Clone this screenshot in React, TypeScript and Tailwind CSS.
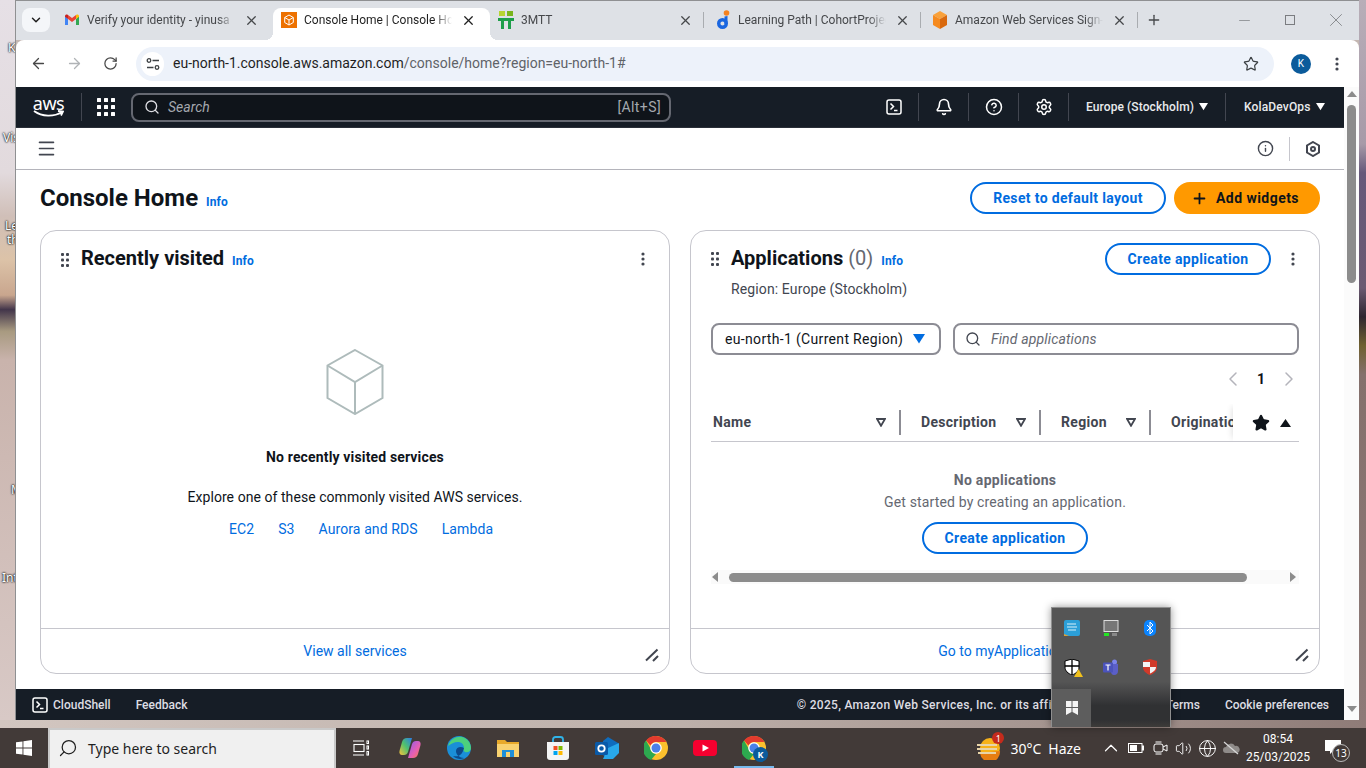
import React from "react";
import {
  ArrowLeft,
  ArrowRight,
  RotateCw,
  Star,
  Plus,
  Minus,
  X,
  ChevronDown,
  ChevronUp,
  ChevronLeft,
  ChevronRight,
  Search,
  Bell,
  CircleHelp,
  Settings,
  Info,
  Menu,
  Volume2,
  Globe,
} from "lucide-react";

/* ---------- small drawn icons ---------- */

function GmailIcon() {
  return (
    <svg width="16" height="16" viewBox="0 0 16 16">
      <path d="M1 4v9h3V7z" fill="#4285f4" />
      <path d="M15 4v9h-3V7z" fill="#34a853" />
      <path d="M12 3v4l3-2.2V4c0-1.4-1.600-2-2.600-1.300z" fill="#fbbc04" />
      <path d="M4 7V3l4 3 4-3v4L8 10z" fill="#ea4335" />
      <path d="M1 4c0-1.400 1.600-2 2.600-1.300L4 3v4L1 4.800z" fill="#c5221f" />
    </svg>
  );
}

function ConsoleFavicon() {
  return (
    <svg width="16" height="16" viewBox="0 0 16 16">
      <rect width="16" height="16" fill="#ed7100" />
      <path d="M8 3l4.300 2.500v5L8 13l-4.300-2.500v-5zM3.700 5.500L8 8l4.300-2.500M8 8v5" fill="none" stroke="#fff" strokeWidth="1" />
    </svg>
  );
}

function MttIcon() {
  return (
    <svg width="16" height="18" viewBox="0 0 16 18">
      <rect x="1" y="0" width="6" height="5" fill="#b6d433" />
      <rect x="9" y="0" width="6" height="5" fill="#7ab51d" />
      <rect x="0" y="7" width="16" height="3" fill="#1e9e4a" />
      <rect x="3" y="10" width="3" height="8" fill="#1e9e4a" />
      <rect x="10" y="10" width="3" height="8" fill="#1e9e4a" />
    </svg>
  );
}

function LearningIcon() {
  return (
    <svg width="16" height="20" viewBox="0 0 16 20">
      <circle cx="11.500" cy="3" r="2.800" fill="#f58220" />
      <circle cx="7.500" cy="13.500" r="3.800" fill="none" stroke="#1a66e0" strokeWidth="3.400" />
      <path d="M9.500 6.500l3-.5v8h-3z" fill="#1a66e0" />
    </svg>
  );
}

function OrangeCube() {
  return (
    <svg width="16" height="20" viewBox="0 0 16 20">
      <path d="M8 1l7 4-7 4-7-4z" fill="#f9a13a" />
      <path d="M1 5l7 4v10l-7-4z" fill="#f58a1f" />
      <path d="M15 5l-7 4v10l7-4z" fill="#d9690e" />
    </svg>
  );
}

function TuneIcon() {
  return (
    <svg width="14" height="14" viewBox="0 0 14 14" fill="none" stroke="#3c4043" strokeWidth="1.300">
      <circle cx="3" cy="3.500" r="1.800" />
      <path d="M6.500 3.500H13M1 10.500h6.500" />
      <circle cx="11" cy="10.500" r="1.800" />
    </svg>
  );
}

function ShellIcon({ size = 16 }: { size?: number }) {
  return (
    <svg width={size} height={size} viewBox="0 0 16 16" fill="none" stroke="#fff" strokeWidth="1.500">
      <rect x="1" y="1" width="14" height="14" rx="2" />
      <path d="M4.500 4.500L7.500 7.500 4.500 10.500M8 11.500h3.500" />
    </svg>
  );
}

function GripIcon() {
  return (
    <svg width="8" height="14" viewBox="0 0 8 14" fill="#424650">
      <rect x="0" y="0" width="3" height="3" rx="1" />
      <rect x="5" y="0" width="3" height="3" rx="1" />
      <rect x="0" y="5.500" width="3" height="3" rx="1" />
      <rect x="5" y="5.500" width="3" height="3" rx="1" />
      <rect x="0" y="11" width="3" height="3" rx="1" />
      <rect x="5" y="11" width="3" height="3" rx="1" />
    </svg>
  );
}

function KebabIcon() {
  return (
    <svg width="4" height="14" viewBox="0 0 4 14" fill="#424650">
      <circle cx="2" cy="2" r="1.600" />
      <circle cx="2" cy="7" r="1.600" />
      <circle cx="2" cy="12" r="1.600" />
    </svg>
  );
}

function ResizeIcon() {
  return (
    <svg width="14" height="14" viewBox="0 0 14 14" stroke="#424650" strokeWidth="2" fill="none">
      <path d="M1 12.500L12.500 1.500M8 13L13 8" />
    </svg>
  );
}

function FilterIcon() {
  return (
    <svg width="10" height="9" viewBox="0 0 10 9" fill="none" stroke="#424650" strokeWidth="1.800">
      <path d="M1 1h8L5 7.800z" />
    </svg>
  );
}

function CaretDown({ color = "#fff", size = 9 }: { color?: string; size?: number }) {
  return (
    <svg width={size} height={size * 0.8} viewBox="0 0 10 8" fill={color}>
      <path d="M0 0h10L5 8z" />
    </svg>
  );
}

function HexIcon() {
  return (
    <svg width="16" height="16" viewBox="0 0 16 16" fill="none" stroke="#424650" strokeWidth="2">
      <path d="M8 1l6 3.500v7L8 15l-6-3.500v-7z" />
      <circle cx="8" cy="8" r="2" />
    </svg>
  );
}

function CubeIcon() {
  return (
    <svg width="58" height="66" viewBox="0 0 58 66" fill="none" stroke="#aebbbb" strokeWidth="2">
      <path d="M29 1l27.500 15.500v32.500L29 65 1.500 49V16.500z" />
      <path d="M1.500 16.500L29 33l27.500-16.500M29 33v32" />
    </svg>
  );
}

function TinyScrollArrow({ dir }: { dir: "up" | "down" | "left" | "right" }) {
  const d = {
    up: "M0 7L5 1l5 6z",
    down: "M0 1l5 6 5-6z",
    left: "M7 0L1 5l6 5z",
    right: "M1 0l6 5-6 5z",
  }[dir];
  return (
    <svg width="10" height="10" viewBox="0 0 10 10" fill="#8c8c8c">
      <path d={d} />
    </svg>
  );
}

/* taskbar app icons */

function WindowsLogo() {
  return (
    <svg width="16" height="16" viewBox="0 0 16 16" fill="#fff">
      <path d="M0 2.300L6.500 1.400V7.500H0zM7.400 1.300L16 0v7.500H7.400zM0 8.400h6.500v6.200L0 13.700zM7.400 8.400H16V16l-8.600-1.200z" />
    </svg>
  );
}

function TaskViewIcon() {
  return (
    <svg width="16" height="16" viewBox="0 0 16 16" fill="none" stroke="#fff" strokeWidth="1.100">
      <path d="M0 1h11M0 15h11" />
      <rect x="1" y="4.500" width="10" height="7" />
      <rect x="14" y="1" width="1.500" height="2.500" />
      <rect x="14" y="6" width="1.500" height="3" />
      <rect x="14" y="11.500" width="1.500" height="3.500" />
    </svg>
  );
}

function CopilotIcon() {
  return (
    <svg width="22" height="22" viewBox="0 0 22 22">
      <defs>
        <linearGradient id="cp1" x1="0" y1="1" x2="1" y2="0">
          <stop offset="0" stopColor="#f9c23c" />
          <stop offset="0.5" stopColor="#4fc26d" />
          <stop offset="1" stopColor="#2b7de9" />
        </linearGradient>
        <linearGradient id="cp2" x1="0" y1="0" x2="1" y2="1">
          <stop offset="0" stopColor="#8a5cf0" />
          <stop offset="0.6" stopColor="#e85fb0" />
          <stop offset="1" stopColor="#f5803e" />
        </linearGradient>
      </defs>
      <path d="M8 1h5l-4 14c-.7 2-2 3-4 3H3c-2 0-3-2-2.500-4L3 5c.7-2.500 2.500-4 5-4z" fill="url(#cp1)" />
      <path d="M14 21H9l4-14c.7-2 2-3 4-3h2c2 0 3 2 2.500 4L19 17c-.7 2.500-2.500 4-5 4z" fill="url(#cp2)" />
    </svg>
  );
}

function EdgeIcon() {
  return (
    <svg width="24" height="24" viewBox="0 0 24 24">
      <circle cx="12" cy="12" r="12" fill="#1a8fd8" />
      <path d="M1 10C3 3 10 0 15 1c5 1 9 6 9 11 0 3-3 5-6 4-2-1-2-3-1-4 0-4-3-6-6-6-4 0-7 2-10 4z" fill="#4cd07d" />
      <path d="M17 12c-3-2-8-1-8 3 0 4 4 7 8 7 1 0-6 3-11-2 5 1 9 0 11-8z" fill="#0c4a8c" />
    </svg>
  );
}

function FolderIcon() {
  return (
    <svg width="22" height="20" viewBox="0 0 22 20">
      <path d="M0 2h8l2 2h12v14H0z" fill="#e8a92a" />
      <path d="M0 6h22v13H0z" fill="#f9d270" />
      <rect x="5" y="12" width="12" height="7" fill="#1f8fd8" />
      <rect x="9" y="14" width="4" height="5" fill="#f9d270" />
    </svg>
  );
}

function StoreIcon() {
  return (
    <svg width="24" height="24" viewBox="0 0 24 24">
      <path d="M7 7V3.500C7 2 8 1 9.500 1h5C16 1 17 2 17 3.500V7" fill="none" stroke="#30b3e8" strokeWidth="1.800" />
      <path d="M1 6h22v15c0 1.700-1 3-3 3H4c-2 0-3-1.300-3-3z" fill="#f4f4f4" />
      <rect x="7.500" y="10" width="4" height="4" fill="#f25022" />
      <rect x="12.500" y="10" width="4" height="4" fill="#7fba00" />
      <rect x="7.500" y="15" width="4" height="4" fill="#00a4ef" />
      <rect x="12.500" y="15" width="4" height="4" fill="#ffb900" />
    </svg>
  );
}

function OutlookIcon() {
  return (
    <svg width="24" height="24" viewBox="0 0 24 24">
      <path d="M13 1l10 6v10l-10 6-5-4V5z" fill="#0f6cbd" />
      <path d="M13 12l11-5v10l-6 6H8z" fill="#28a8ea" />
      <rect x="0" y="6" width="13" height="13" rx="1.500" fill="#0a5aa8" />
      <circle cx="6.500" cy="12.500" r="3.200" fill="none" stroke="#fff" strokeWidth="1.800" />
    </svg>
  );
}

function ChromeIcon({ badge }: { badge?: boolean }) {
  return (
    <div className="relative w-6 h-6">
      <svg width="24" height="24" viewBox="0 0 24 24">
        <circle cx="12" cy="12" r="12" fill="#fbc02d" />
        <path d="M12 0a12 12 0 0 1 10.400 6H12a6 6 0 0 0-5.500 3.500L2 4.500A12 12 0 0 1 12 0z" fill="#e33b2e" />
        <path d="M2 4.500l4.800 8.400a6 6 0 0 0 5.200 5.100L7 24A12 12 0 0 1 2 4.500z" fill="#2da94f" />
        <circle cx="12" cy="12" r="5.800" fill="#fff" />
        <circle cx="12" cy="12" r="4.500" fill="#4a80e8" />
      </svg>
      {badge && (
        <span className="absolute -right-[2px] -bottom-[2px] w-[15px] h-[15px] rounded-full bg-[#0b5b9b] text-white text-[9px] font-bold flex items-center justify-center">
          K
        </span>
      )}
    </div>
  );
}

function YoutubeIcon() {
  return (
    <svg width="24" height="18" viewBox="0 0 24 18">
      <rect width="24" height="16" y="1" rx="4" fill="#f5002f" />
      <path d="M9.500 5.500L16 9l-6.500 3.500z" fill="#fff" />
    </svg>
  );
}

function WeatherIcon() {
  return (
    <div className="relative w-6 h-6">
      <svg width="24" height="24" viewBox="0 0 24 24">
        <circle cx="13" cy="12" r="10" fill="#f7b21a" />
        <path d="M3 17a10 10 0 0 0 20-2z" fill="#e67e12" />
        <path d="M0 9h20M0 13h20M1 17h18" stroke="#e8d4a8" strokeWidth="1.800" />
      </svg>
      <span className="absolute -right-[3px] -top-[4px] w-3 h-3 rounded-full bg-[#c42b1c] text-white text-[9px] leading-none flex items-center justify-center">
        1
      </span>
    </div>
  );
}

/* ---------- browser chrome ---------- */

const tabs = [
  { title: "Verify your identity - yinusa", icon: <GmailIcon /> },
  { title: "Console Home | Console Home", icon: <ConsoleFavicon />, active: true },
  { title: "3MTT", icon: <MttIcon /> },
  { title: "Learning Path | CohortProject", icon: <LearningIcon /> },
  { title: "Amazon Web Services Sign-In", icon: <OrangeCube /> },
];

function BrowserTab({ title, icon, active, sep }: { title: string; icon: React.ReactNode; active?: boolean; sep?: boolean }) {
  return (
    <div
      className={`relative w-[217px] h-8 flex items-center pl-2 pr-3 pb-2 rounded-t-lg ${
        active ? "bg-white text-[#1f1f1f]" : "text-[#45474a]"
      }`}
    >
      {active && (
        <>
          <span className="absolute -left-2 bottom-0 w-2 h-2 bg-[radial-gradient(circle_at_0_0,transparent_8px,white_8px)]" />
          <span className="absolute -right-2 bottom-0 w-2 h-2 bg-[radial-gradient(circle_at_100%_0,transparent_8px,white_8px)]" />
        </>
      )}
      <span className="w-4 h-5 flex items-center justify-center shrink-0">{icon}</span>
      <span className="ml-[7px] w-[148px] overflow-hidden whitespace-nowrap text-[12px] [mask-image:linear-gradient(to_right,black_88%,transparent)]">
        {title}
      </span>
      <X className="ml-[9px] shrink-0" size={15} strokeWidth={2} color={active ? "#1f1f1f" : "#45474a"} />
      {sep && <span className="absolute right-[3px] top-[4px] w-[1.500px] h-4 bg-[#a9acb0]" />}
    </div>
  );
}

function TabStrip() {
  return (
    <div className="h-10 bg-[#dee1e6] border-t border-[#8f9092] flex items-end">
      <div className="w-[28px] h-6 mb-2 ml-[6px] bg-[#f4f6f9] rounded-lg flex items-center justify-center">
        <ChevronDown size={14} strokeWidth={2.500} color="#1f1f1f" />
      </div>
      <div className="flex ml-[6px]">
        {tabs.map((t, i) => (
          <BrowserTab key={t.title} title={t.title} icon={t.icon} active={t.active} sep={i >= 2} />
        ))}
      </div>
      <div className="h-8 pb-2 flex items-center ml-[5px]">
        <Plus size={16} strokeWidth={2} color="#45474a" />
      </div>
      <div className="ml-auto flex h-[38px] self-start">
        <div className="w-[46px] flex items-center justify-center">
          <Minus size={17} strokeWidth={1} color="#7a7c80" />
        </div>
        <div className="w-[46px] flex items-center justify-center">
          <span className="w-[10px] h-[10px] border border-[#7a7c80]" />
        </div>
        <div className="w-[46px] flex items-center justify-center">
          <X size={22} strokeWidth={0.900} color="#7a7c80" />
        </div>
      </div>
    </div>
  );
}

function AddressBar() {
  return (
    <div className="h-[47px] bg-white rounded-t-lg flex items-center pl-1 pr-2">
      <div className="w-9 flex justify-center">
        <ArrowLeft size={17} strokeWidth={1.800} color="#474747" />
      </div>
      <div className="w-9 flex justify-center">
        <ArrowRight size={17} strokeWidth={1.800} color="#b0b3b6" />
      </div>
      <div className="w-9 flex justify-center">
        <RotateCw size={15} strokeWidth={2} color="#474747" />
      </div>
      <div className="ml-[8px] w-[1138px] h-[34px] rounded-full bg-[#edf2fa] flex items-center pl-[5px] pr-[15px]">
        <div className="w-[23px] h-6 rounded-full bg-white flex items-center justify-center">
          <TuneIcon />
        </div>
        <span className="ml-[9px] text-[14px] text-[#5f6368] whitespace-nowrap">
          <span className="text-[#1f1f1f]">eu-north-1.console.aws.amazon.com</span>/console/home?region=eu-north-1#
        </span>
        <Star className="ml-auto" size={16} strokeWidth={1.800} color="#3c4043" />
      </div>
      <div className="ml-[17px] w-5 h-5 rounded-full bg-[#0b5b9b] text-white text-[10px] flex items-center justify-center">K</div>
      <div className="ml-[24px]">
        <KebabIcon />
      </div>
    </div>
  );
}

/* ---------- AWS console ---------- */

function NavIconCell({ children }: { children: React.ReactNode }) {
  return <div className="w-[50px] h-7 flex items-center justify-center border-r border-[#424650]">{children}</div>;
}

function AwsNav() {
  return (
    <div className="h-[41px] bg-[#161d26] flex items-center border-b border-[#2a2f38] pl-[17px]">
      <div className="w-[31px] flex flex-col items-center">
        <span className="text-white text-[18px] leading-[14px] tracking-[-0.5px] [font-family:'Noto_Sans',sans-serif]">aws</span>
        <svg width="31" height="8" viewBox="0 0 31 8" fill="none" stroke="#fff" strokeWidth="1.800">
          <path d="M1 1c8 6 20 6 28 1M25 1l5 .500-2 4" />
        </svg>
      </div>
      <div className="ml-[17px] w-px h-7 bg-[#424650]" />
      <svg className="ml-[15px]" width="18" height="18" viewBox="0 0 18 18" fill="#fff">
        {[0, 7, 14].map((y) =>
          [0, 7, 14].map((x) => <rect key={`${x}-${y}`} x={x} y={y} width="4" height="4" rx="0.500" />)
        )}
      </svg>
      <div className="ml-4 w-[540px] h-[29px] rounded-lg border-2 border-[#656871] bg-[#0f141a] flex items-center pl-[11px] pr-2">
        <Search size={16} strokeWidth={2} color="#dedee3" />
        <span className="ml-[8px] text-[14px] italic text-[#a4a8ae]">Search</span>
        <span className="ml-auto text-[14px] tracking-[0.4px] text-[#a4a8ae]">[Alt+S]</span>
      </div>
      <div className="ml-auto flex items-center">
        <NavIconCell>
          <ShellIcon />
        </NavIconCell>
        <NavIconCell>
          <Bell size={18} strokeWidth={2.200} color="#fff" />
        </NavIconCell>
        <NavIconCell>
          <CircleHelp size={18} strokeWidth={2} color="#fff" />
        </NavIconCell>
        <NavIconCell>
          <Settings size={18} strokeWidth={2} color="#fff" />
        </NavIconCell>
        <div className="w-[157px] h-7 border-r border-[#424650] flex items-center pl-[17px] gap-[5px] text-[12px] font-medium tracking-[0.1px] text-[#e9ebed] whitespace-nowrap">
          Europe (Stockholm)
          <CaretDown />
        </div>
        <div className="w-[118px] h-7 flex items-center pl-[18px] gap-[5px] text-[12px] font-medium tracking-[0.15px] text-[#e9ebed]">
          KolaDevOps
          <CaretDown />
        </div>
      </div>
    </div>
  );
}

function SubNav() {
  return (
    <div className="h-[42px] bg-white border-b border-[#b4b4bb] flex items-center pl-[20px] pr-[23px]">
      <Menu size={21} strokeWidth={1.800} color="#424650" />
      <Info className="ml-auto" size={17} strokeWidth={2} color="#424650" />
      <div className="ml-[15px] w-px h-6 bg-[#c6c6cd]" />
      <div className="ml-[15px]">
        <HexIcon />
      </div>
    </div>
  );
}

function PillButton({ children, className = "" }: { children: React.ReactNode; className?: string }) {
  return (
    <div className={`h-8 rounded-full border-2 border-[#006ce0] bg-white flex items-center justify-center text-[14px] font-bold tracking-[0.35px] text-[#006ce0] ${className}`}>
      {children}
    </div>
  );
}

function RecentlyVisited() {
  return (
    <section className="rounded-2xl border border-[#c6c6cd] bg-white flex flex-col">
      <div className="h-[54px] flex items-center pl-5 pr-[24px]">
        <span className="mt-[3px]">
          <GripIcon />
        </span>
        <h2 className="ml-3 text-[20px] font-bold text-[#0f141a]">Recently visited</h2>
        <span className="ml-2 mt-[5px] text-[12px] font-bold tracking-[0.2px] text-[#006ce0]">Info</span>
        <span className="ml-auto mt-[2px]">
          <KebabIcon />
        </span>
      </div>
      <div className="flex-1 flex flex-col items-center pt-[64px] text-[#0f141a] text-[14px]">
        <CubeIcon />
        <p className="mt-[32px] font-bold tracking-[0.15px]">No recently visited services</p>
        <p className="mt-[19px] tracking-[0.06px]">Explore one of these commonly visited AWS services.</p>
        <div className="mt-[11px] ml-3 flex gap-6 tracking-[0.1px] text-[#006ce0]">
          <span>EC2</span>
          <span>S3</span>
          <span>Aurora and RDS</span>
          <span>Lambda</span>
        </div>
      </div>
      <div className="h-[45px] border-t border-[#c6c6cd] relative flex items-center justify-center text-[14px] text-[#006ce0]">
        View all services
        <span className="absolute right-[10px] top-[19px]">
          <ResizeIcon />
        </span>
      </div>
    </section>
  );
}

function HeaderCell({ label, width }: { label: string; width: string }) {
  return (
    <div className={`${width} shrink-0 flex items-center h-[25px] text-[14px] font-bold tracking-[0.3px] text-[#424650]`}>
      <span>{label}</span>
      <span className="ml-auto">
        <FilterIcon />
      </span>
      <span className="ml-[13px] w-[2px] h-[25px] bg-[#8c8c94]" />
    </div>
  );
}

function Applications() {
  return (
    <section className="rounded-2xl border border-[#c6c6cd] bg-white flex flex-col">
      <div className="pl-5 pr-[24px] pt-[12px] flex items-center">
        <GripIcon />
        <h2 className="ml-3 -mt-[2px] text-[20px] font-bold text-[#0f141a]">
          Applications <span className="font-normal text-[#656871]">(0)</span>
        </h2>
        <span className="ml-2 mt-1 text-[12px] font-bold tracking-[0.2px] text-[#006ce0]">Info</span>
        <PillButton className="ml-auto w-[166px]">Create application</PillButton>
        <span className="ml-5">
          <KebabIcon />
        </span>
      </div>
      <p className="ml-10 mt-[4px] text-[14px] tracking-[0.12px] text-[#424650]">Region: Europe (Stockholm)</p>
      <div className="mt-[23px] mx-5 flex gap-3">
        <div className="w-[230px] h-8 rounded-lg border-2 border-[#8c8c94] flex items-center pl-3 pr-[14px] text-[14px] tracking-[0.33px] text-[#0f141a]">
          eu-north-1 (Current Region)
          <span className="ml-auto">
            <CaretDown color="#006ce0" size={12} />
          </span>
        </div>
        <div className="flex-1 h-8 rounded-lg border-2 border-[#8c8c94] flex items-center pl-[10px]">
          <Search size={16} strokeWidth={2} color="#424650" />
          <span className="ml-[10px] text-[14px] tracking-[0.15px] italic text-[#656871]">Find applications</span>
        </div>
      </div>
      <div className="mt-[14px] mx-5 h-5 flex items-center justify-end text-[14px] font-bold text-[#0f141a]">
        <ChevronLeft size={24} strokeWidth={1.500} color="#b4b4bb" />
        <span className="w-[32px] text-center">1</span>
        <ChevronRight className="-mr-[2px]" size={24} strokeWidth={1.500} color="#b4b4bb" />
      </div>
      <div className="relative mt-[15px] mx-5 h-[38px] border-b border-[#c6c6cd] flex items-center pl-[2px] overflow-hidden">
        <HeaderCell label="Name" width="w-[188px]" />
        <span className="w-5 shrink-0" />
        <HeaderCell label="Description" width="w-[120px]" />
        <span className="w-5 shrink-0" />
        <HeaderCell label="Region" width="w-[90px]" />
        <span className="w-5 shrink-0" />
        <span className="text-[14px] font-bold tracking-[0.3px] text-[#424650] whitespace-nowrap">Origination</span>
        <div className="absolute right-0 top-0 bottom-0 w-[66px] bg-white shadow-[-4px_0_6px_-3px_rgba(0,0,0,0.12)] flex items-center pl-[19px] gap-[10px]">
          <Star size={18} fill="#0f141a" color="#0f141a" />
          <svg width="11" height="8" viewBox="0 0 11 8" fill="#0f141a">
            <path d="M0 8L5.500 0 11 8z" />
          </svg>
        </div>
      </div>
      <div className="flex flex-col items-center mt-[29px] text-[14px] text-[#656871]">
        <p className="font-bold leading-[18px] tracking-[0.3px]">No applications</p>
        <p className="mt-[3px] leading-[20px] tracking-[0.15px]">Get started by creating an application.</p>
        <PillButton className="mt-[10px] w-[166px]">Create application</PillButton>
      </div>
      <div className="mt-[16px] mx-5 h-[14px] bg-[#fafafa] flex items-center">
        <TinyScrollArrow dir="left" />
        <div className="ml-2 w-[518px] h-[9px] rounded-full bg-[#8c8c8c]" />
        <span className="ml-auto">
          <TinyScrollArrow dir="right" />
        </span>
      </div>
      <div className="mt-auto h-[45px] border-t border-[#c6c6cd] relative flex items-center justify-center text-[14px] text-[#006ce0]">
        Go to myApplications
        <span className="absolute right-[10px] top-[19px]">
          <ResizeIcon />
        </span>
      </div>
    </section>
  );
}

function ConsoleContent() {
  return (
    <div className="flex-1 bg-white px-6 pt-3 pb-[15px] flex flex-col min-h-0">
      <div className="flex items-center h-8">
        <h1 className="text-[24px] font-bold text-[#0f141a]">Console Home</h1>
        <span className="ml-2 mt-2 text-[12px] font-bold tracking-[0.1px] text-[#006ce0]">Info</span>
        <PillButton className="ml-auto w-[196px]">Reset to default layout</PillButton>
        <div className="ml-2 w-[146px] h-8 pr-1 rounded-full bg-[#ff9900] flex items-center justify-center gap-2 text-[14px] font-bold tracking-[0.45px] text-[#0f141a]">
          <Plus size={17} strokeWidth={2.500} />
          Add widgets
        </div>
      </div>
      <div className="mt-4 flex-1 grid grid-cols-2 gap-5 min-h-0">
        <RecentlyVisited />
        <Applications />
      </div>
    </div>
  );
}

function ConsoleFooter() {
  return (
    <div className="h-[31px] bg-[#161d26] flex items-center pl-4 pr-[15px] text-[12px] font-medium text-[#dedee3] whitespace-nowrap">
      <ShellIcon />
      <span className="ml-[5px]">CloudShell</span>
      <span className="ml-[25px]">Feedback</span>
      <span className="ml-auto tracking-[0.3px]">© 2025, Amazon Web Services, Inc. or its affiliates.</span>
      <span className="ml-5">Privacy</span>
      <span className="ml-5">Terms</span>
      <span className="ml-[25px]">Cookie preferences</span>
    </div>
  );
}

function PageScrollbar() {
  return (
    <div className="w-[15px] bg-[#fbfbfb] flex flex-col items-center pt-[3px] pb-[5px]">
      <TinyScrollArrow dir="up" />
      <div className="mt-[5px] w-[9px] h-[178px] rounded-full bg-[#8c8c8c]" />
      <span className="mt-auto">
        <TinyScrollArrow dir="down" />
      </span>
    </div>
  );
}

/* ---------- desktop ---------- */

function TrayPopup() {
  return (
    <div className="absolute left-[1051px] top-[607px] w-[120px] h-[120px] grid grid-cols-3 grid-rows-3 border-t border-x border-[#8f8f8f] bg-[linear-gradient(#555555_62%,#303133_82%,#303133_94%,#3d3b39)] shadow-[0_0_8px_rgba(0,0,0,0.4)] items-center justify-items-center">
      <svg width="16" height="16" viewBox="0 0 16 16">
        <rect width="16" height="16" rx="2" fill="#2b9fd8" />
        <path d="M3 4h9M3 7h10M4 10h8" stroke="#d8f0fa" strokeWidth="1" />
        <path d="M0 14l5 2H0z" fill="#e0a030" />
      </svg>
      <svg width="16" height="16" viewBox="0 0 16 16">
        <rect x="1" y="0.500" width="14" height="11" fill="#777" stroke="#ddd" />
        <rect x="1" y="13" width="5" height="3" fill="#22e622" />
        <rect x="9" y="13" width="5" height="3" fill="#888" />
      </svg>
      <svg width="12" height="16" viewBox="0 0 12 16">
        <rect width="12" height="16" rx="5" fill="#0a84ff" />
        <path d="M3 5l6 6-3 3V2l3 3-6 6" fill="none" stroke="#fff" strokeWidth="1" />
      </svg>
      <div className="relative w-[16px] h-[16px]">
        <svg width="16" height="16" viewBox="0 0 16 16">
          <path d="M8 0l7 2v6c0 4-3 6.500-7 8-4-1.500-7-4-7-8V2z" fill="#fff" stroke="#000" />
          <path d="M8 0v16M1 7h14" stroke="#000" strokeWidth="1.300" />
        </svg>
        <svg className="absolute -right-[3px] -bottom-[2px]" width="9" height="8" viewBox="0 0 9 8">
          <path d="M4.500 0L9 8H0z" fill="#f2c11b" />
        </svg>
      </div>
      <svg width="16" height="16" viewBox="0 0 16 16">
        <circle cx="11.500" cy="3" r="2.500" fill="#7b83eb" />
        <path d="M8 5h7v7c0 2-1 4-4 4-2 0-3-2-3-3z" fill="#5b5fc7" />
        <rect x="0" y="3.500" width="10" height="10" rx="1" fill="#4b53bc" />
        <path d="M2.500 6h5M5 6v5.500" stroke="#fff" strokeWidth="1.200" />
      </svg>
      <svg width="16" height="16" viewBox="0 0 16 16">
        <path d="M8 0l7 2v6c0 4-3 6.500-7 8-4-1.500-7-4-7-8V2z" fill="#d13a2a" />
        <path d="M8 3H1v5h7zM8 8h6c0 3-2.500 5-6 6.500z" fill="#f4f4f4" />
      </svg>
      <div className="self-stretch justify-self-stretch mt-[2px] bg-[#5d5d5d] flex items-center justify-center">
        <svg width="12" height="14" viewBox="0 0 12 14" fill="#f4f4f4">
          <path d="M0 0h5.500v6H0zM6.500 0H12v6H6.500zM0 7h5.500v4L0 14zM6.500 7H12v7l-5.500-3z" />
        </svg>
      </div>
    </div>
  );
}

function AppIcon({ w, children, active }: { w: string; children: React.ReactNode; active?: boolean }) {
  return (
    <div className={`relative ${w} h-10 flex items-center justify-center shrink-0`}>
      {children}
      {active && <span className="absolute left-0 right-0 bottom-0 h-[2px] bg-[#76b9ed]" />}
    </div>
  );
}

function Taskbar() {
  return (
    <div className="h-10 bg-[#423a38] flex items-center text-white [font-family:'Noto_Sans',sans-serif]">
      <div className="w-12 flex justify-center">
        <WindowsLogo />
      </div>
      <div className="w-[288px] h-10 bg-[#f0f0f0] border-x-2 border-t-2 border-[#c9c9c9] flex items-center pl-[8px] pb-[2px] text-[14px] text-[#1f1f1f]">
        <Search size={20} strokeWidth={1.500} className="-scale-x-100 shrink-0" />
        <span className="ml-[10px]">Type here to search</span>
      </div>
      <AppIcon w="w-[49.250px]">
        <TaskViewIcon />
      </AppIcon>
      <AppIcon w="w-[49.250px]">
        <CopilotIcon />
      </AppIcon>
      <AppIcon w="w-[49.250px]">
        <EdgeIcon />
      </AppIcon>
      <AppIcon w="w-[49.250px]">
        <FolderIcon />
      </AppIcon>
      <AppIcon w="w-[49.250px]">
        <StoreIcon />
      </AppIcon>
      <AppIcon w="w-[49.250px]">
        <OutlookIcon />
      </AppIcon>
      <AppIcon w="w-[49.250px]">
        <ChromeIcon />
      </AppIcon>
      <AppIcon w="w-[49.250px]">
        <YoutubeIcon />
      </AppIcon>
      <div className="ml-1">
        <AppIcon w="w-[40px]" active>
          <ChromeIcon badge />
        </AppIcon>
      </div>
      <div className="ml-auto flex items-center text-[14px]">
        <WeatherIcon />
        <span className="ml-[9px]">30°C</span>
        <span className="ml-[7px]">Haze</span>
        <ChevronUp className="ml-[19px]" size={22} strokeWidth={1.300} />
        <svg className="ml-[6px]" width="16" height="10" viewBox="0 0 16 10" fill="none" stroke="#fff">
          <rect x="0.500" y="0.500" width="13.500" height="9" />
          <rect x="2" y="2" width="7" height="6" fill="#fff" stroke="none" />
          <rect x="14.500" y="3" width="1" height="4" fill="#fff" />
        </svg>
        <svg className="ml-[9px]" width="15" height="16" viewBox="0 0 15 16" fill="none" stroke="#fff">
          <rect x="1" y="4" width="9" height="8" rx="2" />
          <path d="M10 7l4-2v6l-4-2M2.500 2h6M2.500 14h6" />
        </svg>
        <Volume2 className="ml-[7px]" size={17} strokeWidth={1.300} />
        <Globe className="ml-[6px]" size={19} strokeWidth={1.200} />
        <svg className="ml-[6px]" width="17" height="14" viewBox="0 0 17 14" fill="#8f8b89">
          <path d="M3 12a3 3 0 0 1 0-6 5 5 0 0 1 9-1 3.500 3.500 0 0 1 2 7z" />
          <path d="M1 1l14 12" stroke="#d8d8d8" strokeWidth="1.200" />
        </svg>
        <div className="ml-[6px] w-[64px] flex flex-col items-center text-[12px] leading-[18px] [font-family:Roboto,sans-serif]">
          <span>08:54</span>
          <span>25/03/2025</span>
        </div>
        <div className="relative ml-[15px] mr-[25px] w-4 h-4">
          <svg width="16" height="14" viewBox="0 0 16 14" fill="#fff">
            <path d="M0 0h16v11H8l-3 3v-3H0z" />
          </svg>
          <span className="absolute -right-[9px] -bottom-[6px] w-[18px] h-[18px] rounded-full border border-[#bbb] bg-[#423a38] text-[10px] leading-none flex items-center justify-center">
            13
          </span>
        </div>
      </div>
    </div>
  );
}

function DesktopLabel({ text, pos }: { text: string; pos: string }) {
  return (
    <span className={`absolute ${pos} text-[12px] leading-[14px] text-white whitespace-nowrap [text-shadow:0_0_2px_#000,0_0_2px_#000]`}>
      {text}
    </span>
  );
}

export default function App() {
  return (
    <div className="relative w-[1366px] h-[768px] overflow-hidden bg-[#c4b7b2] [font-family:Roboto,sans-serif]">
      <div className="h-[720px] flex">
        {/* wallpaper strip with the clipped desktop labels */}
        <div className="relative w-[15px] overflow-hidden [font-family:'Noto_Sans',sans-serif] bg-[linear-gradient(#e6e0e6_0%,#e2dadd_24%,#d0bfb8_30%,#dcc3a8_36%,#c9a68e_41%,#42354a_43%,#a89a80_46%,#c9b3ac_50%,#d8c9c6_100%)]">
          <DesktopLabel text="Kola" pos="left-[8px] top-[41px]" />
          <DesktopLabel text="Visual" pos="left-[3px] top-[131px]" />
          <DesktopLabel text="Learn" pos="left-[5px] top-[219px]" />
          <DesktopLabel text="the" pos="left-[7px] top-[233px]" />
          <DesktopLabel text="My" pos="left-[11px] top-[483px]" />
          <DesktopLabel text="Intel" pos="left-[2px] top-[571px]" />
        </div>
        <div className="flex-1 flex flex-col border-l border-[#8f9092] min-w-0">
          <TabStrip />
          <AddressBar />
          <div className="flex-1 flex min-h-0">
            <div className="flex-1 flex flex-col min-w-0">
              <AwsNav />
              <SubNav />
              <ConsoleContent />
              <ConsoleFooter />
            </div>
            <PageScrollbar />
          </div>
        </div>
        <div className="w-[7px] bg-[linear-gradient(#b8aeb8_0%,#a79aa8_20%,#66587a_24%,#6b5a72_40%,#2e2630_44%,#6f6030_48%,#84706c_52%,#8d7a78_100%)]" />
      </div>
      <div className="h-2 bg-[linear-gradient(to_right,#d2c6c0,#bdb0aa_50%,#8f7c78)]" />
      <Taskbar />
      <TrayPopup />
    </div>
  );
}
